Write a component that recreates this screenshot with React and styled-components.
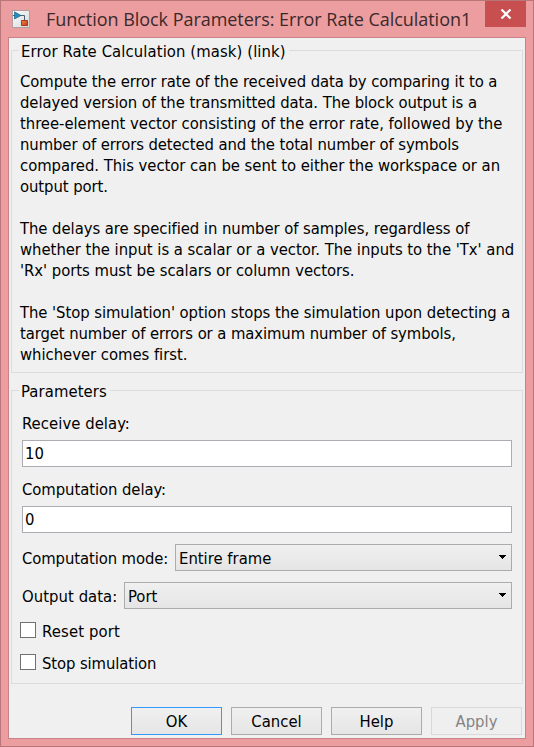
import React from "react";
import styled, { createGlobalStyle } from "styled-components";

const GlobalStyle = createGlobalStyle`
  * { box-sizing: border-box; }
  body { margin: 0; }
`;

const Window = styled.div`
  width: 534px;
  height: 747px;
  padding: 0 7px 7px;
  border: 1px solid #b87679;
  background: #eb9da0;
  color: #000;
  font: 16.5px/21px "DejaVu Sans Condensed", "DejaVu Sans", sans-serif;
  font-variant-ligatures: none;
`;

const TitleBar = styled.header`
  display: flex;
  height: 36px;
  padding-left: 4px;
`;

const AppIcon = styled.svg`
  flex: none;
  width: 18px;
  height: 18px;
  margin-top: 9px;
`;

const Title = styled.h1`
  flex: 1;
  margin: 0 0 0 16px;
  color: #3b292a;
  font: 400 18px/37px "Open Sans", sans-serif;
  letter-spacing: -0.04px;
  white-space: nowrap;
`;

const CloseButton = styled.button`
  display: flex;
  flex: none;
  align-items: center;
  justify-content: center;
  width: 41px;
  height: 26px;
  padding: 0;
  border: 0;
  background: #c74f50;
`;

const Client = styled.main`
  display: flex;
  flex-direction: column;
  height: 702px;
  padding: 12px 2px 3px;
  border: 1px solid #c98285;
  background: #f0f0f0;
`;

const Group = styled.fieldset`
  flex: none;
  min-width: 0;
  height: ${(p) => p.$height}px;
  margin: 0 0 ${(p) => p.$gap}px;
  padding: 0;
  border: 1px solid #dcdcdc;
`;

const Legend = styled.div`
  width: fit-content;
  margin: -10px 0 0 7px;
  padding: 0 3px 0 2px;
  background: #f0f0f0;
  letter-spacing: ${(p) => p.$track}px;
  white-space: nowrap;
`;

const Description = styled.div`
  margin: 9px 0 0 8px;
`;

const Paragraph = styled.p`
  margin: 0 0 21px;
`;

const Line = styled.span`
  display: block;
  letter-spacing: ${(p) => p.$track}px;
  white-space: nowrap;
`;

const Fields = styled.div`
  display: flex;
  flex-direction: column;
  padding: 11px 10px 0;
`;

const Label = styled.label`
  flex: none;
  letter-spacing: ${(p) => p.$track || 0}px;
  white-space: nowrap;
`;

const TextField = styled.input`
  width: 100%;
  height: 27px;
  margin: ${(p) => p.$top}px 0 ${(p) => p.$bottom}px;
  padding: 0 2px;
  border: 1px solid #abadb3;
  border-radius: 0;
  outline: 0;
  background: #fff;
  color: #000;
  font: inherit;
`;

const SelectRow = styled.div`
  display: flex;
  align-items: center;
  justify-content: space-between;
  height: 27px;
  margin-bottom: 11px;

  ${Label} {
    padding-top: 2px;
  }
`;

const Select = styled.div`
  display: flex;
  align-items: center;
  justify-content: space-between;
  width: ${(p) => p.$width}px;
  height: 27px;
  padding: 2px 5px 0 3px;
  border: 1px solid #acacac;
  background: linear-gradient(#f0f0f0, #e5e5e5);
`;

const Arrow = styled.svg`
  width: 7px;
  height: 4px;
  margin-top: -3px;
`;

const CheckRow = styled.label`
  display: flex;
  align-items: center;
  gap: 6px;
  height: 18px;
  margin: 2px 0 12px -2px;
  letter-spacing: ${(p) => p.$track}px;
`;

const CheckBox = styled.span`
  width: 16px;
  height: 16px;
  margin-top: -2px;
  border: 1px solid #707070;
  background: #fff;
`;

const Actions = styled.footer`
  display: flex;
  justify-content: flex-end;
  gap: 9px;
  padding-right: 1px;
`;

const Button = styled.button`
  width: 91px;
  height: 28px;
  padding: 0;
  border: 1px solid ${(p) => (p.$primary ? "#3399ff" : "#acacac")};
  border-radius: 0;
  background: linear-gradient(#f0f0f0, #e5e5e5);
  color: #000;
  font: inherit;

  &:disabled {
    border-color: #d9d9d9;
    background: #efefef;
    color: #838383;
  }
`;

const paragraphs = [
  [
    ["Compute the error rate of the received data by comparing it to a", -0.07],
    ["delayed version of the transmitted data. The block output is a", -0.07],
    ["three-element vector consisting of the error rate, followed by the", -0.035],
    ["number of errors detected and the total number of symbols", -0.09],
    ["compared. This vector can be sent to either the workspace or an", -0.03],
    ["output port.", -0.07],
  ],
  [
    ["The delays are specified in number of samples, regardless of", -0.055],
    ["whether the input is a scalar or a vector. The inputs to the 'Tx' and", -0.03],
    ["'Rx' ports must be scalars or column vectors.", -0.03],
  ],
  [
    ["The 'Stop simulation' option stops the simulation upon detecting a", -0.065],
    ["target number of errors or a maximum number of symbols,", -0.09],
    ["whichever comes first.", -0.03],
  ],
];

function DropDown({ width, children }) {
  return (
    <Select $width={width}>
      {children}
      <Arrow viewBox="0 0 7 4" shapeRendering="crispEdges">
        <path d="M0 0h7v1h-1v1h-1v1h-1v1h-1v-1h-1v-1h-1v-1h-1z" />
      </Arrow>
    </Select>
  );
}

export default function App() {
  return (
    <>
      <GlobalStyle />
      <Window>
        <TitleBar>
          <AppIcon viewBox="0 0 18 18">
            <defs>
              <linearGradient id="tile" x2="1" y2="1">
                <stop stopColor="#fff" />
                <stop offset="1" stopColor="#d2d6d7" />
              </linearGradient>
              <linearGradient id="block" x2="1" y2="1">
                <stop stopColor="#f08050" />
                <stop offset="1" stopColor="#c63d12" />
              </linearGradient>
            </defs>
            <path d="M.5.5h17v17H.5z" fill="url(#tile)" stroke="#b39da0" />
            <path d="M1 5.500h2M8 5.500h4.500v5" fill="none" stroke="#48606c" />
            <path d="M2.500 1.800 9 5.500 2.500 9z" fill="#268bbd" stroke="#1b668e" strokeWidth=".7" />
            <path d="M9.500 10.500h6v5h-6z" fill="url(#block)" stroke="#a53a18" />
          </AppIcon>
          <Title>Function Block Parameters: Error Rate Calculation1</Title>
          <CloseButton aria-label="Close">
            <svg width="12" height="10" viewBox="0 0 12 10">
              <path d="M1.500.5 10.500 9.500M10.500.5 1.500 9.500" stroke="#fff" strokeWidth="2.200" />
            </svg>
          </CloseButton>
        </TitleBar>
        <Client>
          <Group $height={323} $gap={17}>
            <Legend $track={0.1}>Error Rate Calculation (mask) (link)</Legend>
            <Description>
              {paragraphs.map((lines, i) => (
                <Paragraph key={i}>
                  {lines.map(([text, track]) => (
                    <Line key={text} $track={track}>{text}</Line>
                  ))}
                </Paragraph>
              ))}
            </Description>
          </Group>
          <Group $height={294} $gap={23}>
            <Legend $track={0.1}>Parameters</Legend>
            <Fields>
              <Label $track={0.05}>Receive delay:</Label>
              <TextField $top={6} $bottom={12} defaultValue="10" />
              <Label $track={-0.07}>Computation delay:</Label>
              <TextField $top={6} $bottom={11} defaultValue="0" />
              <SelectRow>
                <Label $track={-0.1}>Computation mode:</Label>
                <DropDown width={337}>Entire frame</DropDown>
              </SelectRow>
              <SelectRow>
                <Label $track={0.05}>Output data:</Label>
                <DropDown width={388}>Port</DropDown>
              </SelectRow>
              <CheckRow $track={0.15}><CheckBox />Reset port</CheckRow>
              <CheckRow $track={-0.1}><CheckBox />Stop simulation</CheckRow>
            </Fields>
          </Group>
          <Actions>
            <Button $primary>OK</Button>
            <Button>Cancel</Button>
            <Button>Help</Button>
            <Button disabled>Apply</Button>
          </Actions>
        </Client>
      </Window>
    </>
  );
}
